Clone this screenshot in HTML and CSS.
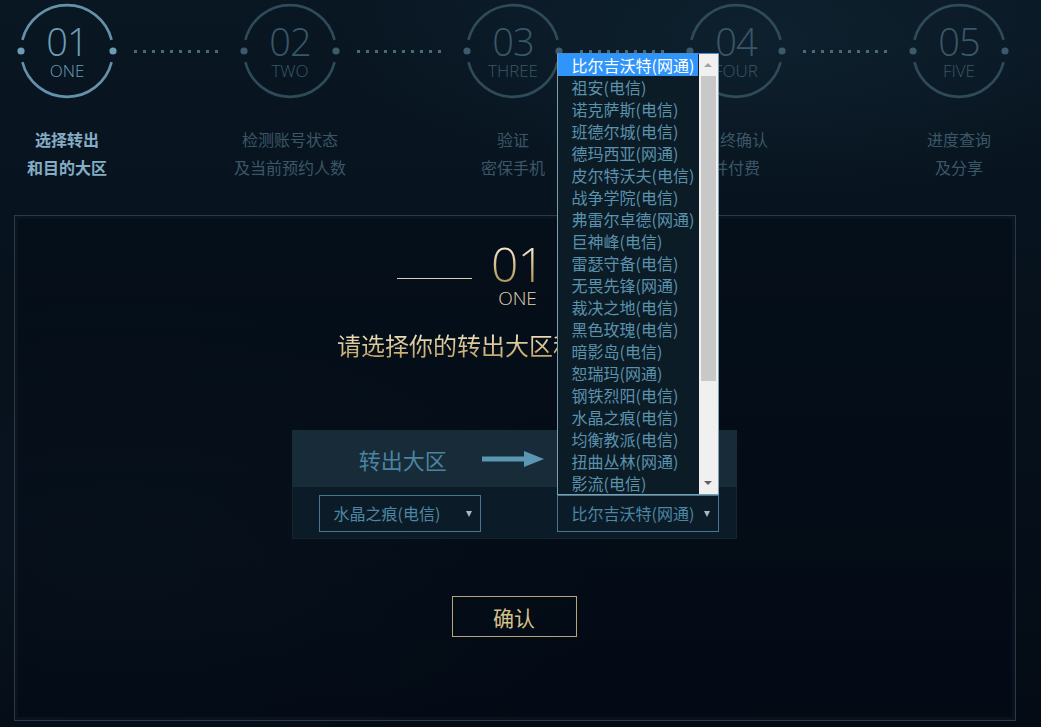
FILE: index.html
```html
<!DOCTYPE html>
<html lang="zh-CN">
<head>
    <meta charset="UTF-8">
    <meta name="viewport" content="width=device-width, initial-scale=1.0">
    <title>转区服务 - 选择大区</title>
    <link rel="stylesheet" href="styles.css">
</head>
<body>
    <!-- 流程步骤 -->
    <ul class="steps">
        <li class="step active">
            <div class="step-ring">
                <svg class="ring" viewBox="0 0 100 100" width="100" height="100">
                    <path d="M5.4 38.9 A46 46 0 0 1 94.6 38.9 M5.4 61.1 A46 46 0 0 0 94.6 61.1" />
                    <circle cx="4" cy="50" r="3.6" />
                    <circle cx="96" cy="50" r="3.6" />
                </svg>
                <span class="step-num">01</span>
                <span class="step-en">ONE</span>
            </div>
            <p class="step-label">选择转出<br>和目的大区</p>
        </li>
        <li class="step-link"></li>
        <li class="step">
            <div class="step-ring">
                <svg class="ring" viewBox="0 0 100 100" width="100" height="100">
                    <path d="M5.4 38.9 A46 46 0 0 1 94.6 38.9 M5.4 61.1 A46 46 0 0 0 94.6 61.1" />
                    <circle cx="4" cy="50" r="3.6" />
                    <circle cx="96" cy="50" r="3.6" />
                </svg>
                <span class="step-num">02</span>
                <span class="step-en">TWO</span>
            </div>
            <p class="step-label">检测账号状态<br>及当前预约人数</p>
        </li>
        <li class="step-link"></li>
        <li class="step">
            <div class="step-ring">
                <svg class="ring" viewBox="0 0 100 100" width="100" height="100">
                    <path d="M5.4 38.9 A46 46 0 0 1 94.6 38.9 M5.4 61.1 A46 46 0 0 0 94.6 61.1" />
                    <circle cx="4" cy="50" r="3.6" />
                    <circle cx="96" cy="50" r="3.6" />
                </svg>
                <span class="step-num">03</span>
                <span class="step-en">THREE</span>
            </div>
            <p class="step-label">验证<br>密保手机</p>
        </li>
        <li class="step-link"></li>
        <li class="step">
            <div class="step-ring">
                <svg class="ring" viewBox="0 0 100 100" width="100" height="100">
                    <path d="M5.4 38.9 A46 46 0 0 1 94.6 38.9 M5.4 61.1 A46 46 0 0 0 94.6 61.1" />
                    <circle cx="4" cy="50" r="3.6" />
                    <circle cx="96" cy="50" r="3.6" />
                </svg>
                <span class="step-num">04</span>
                <span class="step-en">FOUR</span>
            </div>
            <p class="step-label">最终确认<br>并付费</p>
        </li>
        <li class="step-link"></li>
        <li class="step">
            <div class="step-ring">
                <svg class="ring" viewBox="0 0 100 100" width="100" height="100">
                    <path d="M5.4 38.9 A46 46 0 0 1 94.6 38.9 M5.4 61.1 A46 46 0 0 0 94.6 61.1" />
                    <circle cx="4" cy="50" r="3.6" />
                    <circle cx="96" cy="50" r="3.6" />
                </svg>
                <span class="step-num">05</span>
                <span class="step-en">FIVE</span>
            </div>
            <p class="step-label">进度查询<br>及分享</p>
        </li>
    </ul>

    <section class="panel">
        <div class="panel-title">
            <span class="rule"></span>
            <div class="title-num">
                <span class="big">01</span>
                <span class="en">ONE</span>
            </div>
            <span class="rule"></span>
        </div>

        <h2 class="prompt">请选择你的转出大区和转入大区：</h2>

        <div class="server-box">
            <div class="server-head">
                <div class="head-cell">转出大区</div>
                <svg class="head-arrow" width="62" height="16" viewBox="0 0 62 16">
                    <rect x="0" y="5.5" width="44" height="5" />
                    <path d="M42 0 L62 8 L42 16 Z" />
                </svg>
                <div class="head-cell">转入大区</div>
            </div>
            <div class="server-row">
                <div class="select">水晶之痕(电信)<i class="caret"></i></div>
                <div class="select open">比尔吉沃特(网通)<i class="caret"></i>
                    <div class="dropdown">
                        <ul class="options">
                            <li class="selected">比尔吉沃特(网通)</li>
                            <li>祖安(电信)</li>
                            <li>诺克萨斯(电信)</li>
                            <li>班德尔城(电信)</li>
                            <li>德玛西亚(网通)</li>
                            <li>皮尔特沃夫(电信)</li>
                            <li>战争学院(电信)</li>
                            <li>弗雷尔卓德(网通)</li>
                            <li>巨神峰(电信)</li>
                            <li>雷瑟守备(电信)</li>
                            <li>无畏先锋(网通)</li>
                            <li>裁决之地(电信)</li>
                            <li>黑色玫瑰(电信)</li>
                            <li>暗影岛(电信)</li>
                            <li>恕瑞玛(网通)</li>
                            <li>钢铁烈阳(电信)</li>
                            <li>水晶之痕(电信)</li>
                            <li>均衡教派(电信)</li>
                            <li>扭曲丛林(网通)</li>
                            <li>影流(电信)</li>
                        </ul>
                        <div class="scrollbar">
                            <span class="sb-btn up"></span>
                            <span class="sb-track"><span class="sb-thumb"></span></span>
                            <span class="sb-btn down"></span>
                        </div>
                    </div>
                </div>
            </div>
        </div>

        <button class="confirm" type="button">确认</button>
    </section>
</body>
</html>
```

FILE: styles.css
```css
* {
    margin: 0;
    padding: 0;
    box-sizing: border-box;
}

body {
    font-family: "Noto Sans CJK SC", "Liberation Sans", sans-serif;
    background:
        radial-gradient(ellipse 420px 160px at 760px 40px, rgba(40, 80, 100, 0.18), transparent),
        radial-gradient(ellipse 500px 260px at 120px 560px, rgba(30, 60, 80, 0.14), transparent),
        linear-gradient(180deg, #091723 0%, #07131e 30%, #040b15 100%);
    min-height: 727px;
    overflow: hidden;
}

/* ---------- 步骤条 ---------- */
.steps {
    list-style: none;
    display: flex;
    align-items: flex-start;
    padding: 1px 0 0 17px;
}

.step {
    width: 100px;
    display: flex;
    flex-direction: column;
    align-items: center;
}

.step-ring {
    position: relative;
    width: 100px;
    height: 100px;
    display: flex;
    flex-direction: column;
    align-items: center;
    padding-top: 21px;
    color: #3a5767;
}

.ring {
    position: absolute;
    left: 0;
    top: 0;
}

.ring path {
    fill: none;
    stroke: #2f4a59;
    stroke-width: 2.6;
}

.ring circle {
    fill: #3c5a6a;
}

.step-num {
    font-family: "Open Sans", "Liberation Sans", sans-serif;
    font-weight: 300;
    font-size: 38px;
    line-height: 38px;
    letter-spacing: -1px;
}

.step-en {
    font-family: "Open Sans", "Liberation Sans", sans-serif;
    font-weight: 300;
    font-size: 17px;
    line-height: 18px;
    margin-top: 2px;
}

.step-label {
    margin-top: 24px;
    white-space: nowrap;
    text-align: center;
    font-size: 16px;
    line-height: 28px;
    color: #3b5767;
}

.step.active .step-ring {
    color: #6d9db6;
}

.step.active .ring path {
    stroke: #6592aa;
}

.step.active .ring circle {
    fill: #6d9db6;
}

.step.active .step-label {
    color: #85adc3;
    font-weight: bold;
}

.step-link {
    width: 123px;
    height: 100px;
    display: flex;
    align-items: center;
    justify-content: center;
}

.step-link::before {
    content: "";
    display: block;
    width: 90px;
    height: 3px;
    background: repeating-linear-gradient(90deg, #4a6a7a 0 3px, transparent 3px 9px);
}

/* ---------- 主面板 ---------- */
.panel {
    margin: 34px 0 0 14px;
    width: 1002px;
    height: 506px;
    border: 1px solid #2a3a48;
    box-shadow: inset 0 0 0 3px rgba(20, 35, 48, 0.35);
    background: rgba(3, 10, 20, 0.35);
    padding-top: 24px;
    display: flex;
    flex-direction: column;
    align-items: center;
}

.panel-title {
    display: flex;
    align-items: center;
    gap: 19px;
    margin-left: 5px;
}

.rule {
    width: 75px;
    height: 1px;
    background: #d8cfb6;
    margin-top: 8px;
}

.title-num {
    display: flex;
    flex-direction: column;
    align-items: center;
    font-family: "Open Sans", "Liberation Sans", sans-serif;
    font-weight: 300;
    color: #d9c89a;
}

.title-num .big {
    font-size: 48px;
    line-height: 48px;
    letter-spacing: -1px;
    background: linear-gradient(180deg, #f4ead0 15%, #d0b47a 60%, #a98c55 95%);
    -webkit-background-clip: text;
    background-clip: text;
    color: transparent;
}

.title-num .en {
    font-size: 19px;
    line-height: 20px;
    color: #e0d4b2;
}

.prompt {
    margin-top: 19px;
    margin-left: 4px;
    font-size: 24px;
    line-height: 36px;
    font-weight: normal;
    background: linear-gradient(180deg, #efe2bc 20%, #c6a96e 80%);
    -webkit-background-clip: text;
    background-clip: text;
    color: transparent;
}

/* ---------- 大区选择 ---------- */
.server-box {
    margin-top: 67px;
    margin-left: -2px;
    width: 445px;
}

.server-head {
    height: 57px;
    display: grid;
    grid-template-columns: 1fr 0 1fr;
    align-items: center;
    background: #172b38;
}

.head-cell {
    text-align: center;
    font-size: 22px;
    color: #4a84a1;
}

.head-arrow {
    margin-left: -32px;
    margin-top: 1px;
    fill: #5b97b3;
}

.server-row {
    height: 52px;
    display: flex;
    align-items: center;
    gap: 76px;
    padding: 1px 0 0 26px;
    background: #0b1c28;
    border: 1px solid #13242f;
    border-top: none;
}

.select {
    position: relative;
    width: 162px;
    height: 37px;
    border: 1px solid #46778c;
    padding-left: 14px;
    font-size: 16px;
    line-height: 35px;
    color: #4c86a2;
}

.caret {
    position: absolute;
    right: 8px;
    top: 15px;
    border-left: 3px solid transparent;
    border-right: 3px solid transparent;
    border-top: 6px solid #9fbdcc;
}

/* 展开的下拉列表 */
.dropdown {
    position: absolute;
    left: -1px;
    bottom: 100%;
    margin-bottom: 1px;
    width: 162px;
    display: flex;
    border: 1px solid #7d9fb2;
    border-top-color: #3d8fe0;
    background: #0b1c27;
}

.options {
    list-style: none;
    flex: 1;
    padding-right: 1px;
}

.options li {
    height: 22px;
    line-height: 22px;
    padding-left: 14px;
    font-size: 16px;
    color: #5b91ab;
    white-space: nowrap;
}

.options li.selected {
    background: #3095fb;
    color: #ffffff;
}

.scrollbar {
    width: 19px;
    display: flex;
    flex-direction: column;
    background: #f0f0f0;
}

.sb-btn {
    height: 22px;
    display: flex;
    align-items: center;
    justify-content: center;
}

.sb-btn::before {
    content: "";
    border-left: 4px solid transparent;
    border-right: 4px solid transparent;
}

.sb-btn.up::before {
    border-bottom: 4px solid #a3a3a3;
}

.sb-btn.down::before {
    border-top: 4px solid #606060;
}

.sb-track {
    flex: 1;
    padding: 0 2px;
}

.sb-thumb {
    display: block;
    height: 305px;
    background: #c8c8c8;
}

/* ---------- 确认按钮 ---------- */
.confirm {
    margin-top: 57px;
    margin-left: -2px;
    width: 125px;
    height: 41px;
    border: 1px solid #b9a678;
    background: transparent;
    font-family: "Noto Sans CJK SC", sans-serif;
    font-size: 21px;
    line-height: 38px;
    color: #d6c08a;
    cursor: pointer;
}
```
